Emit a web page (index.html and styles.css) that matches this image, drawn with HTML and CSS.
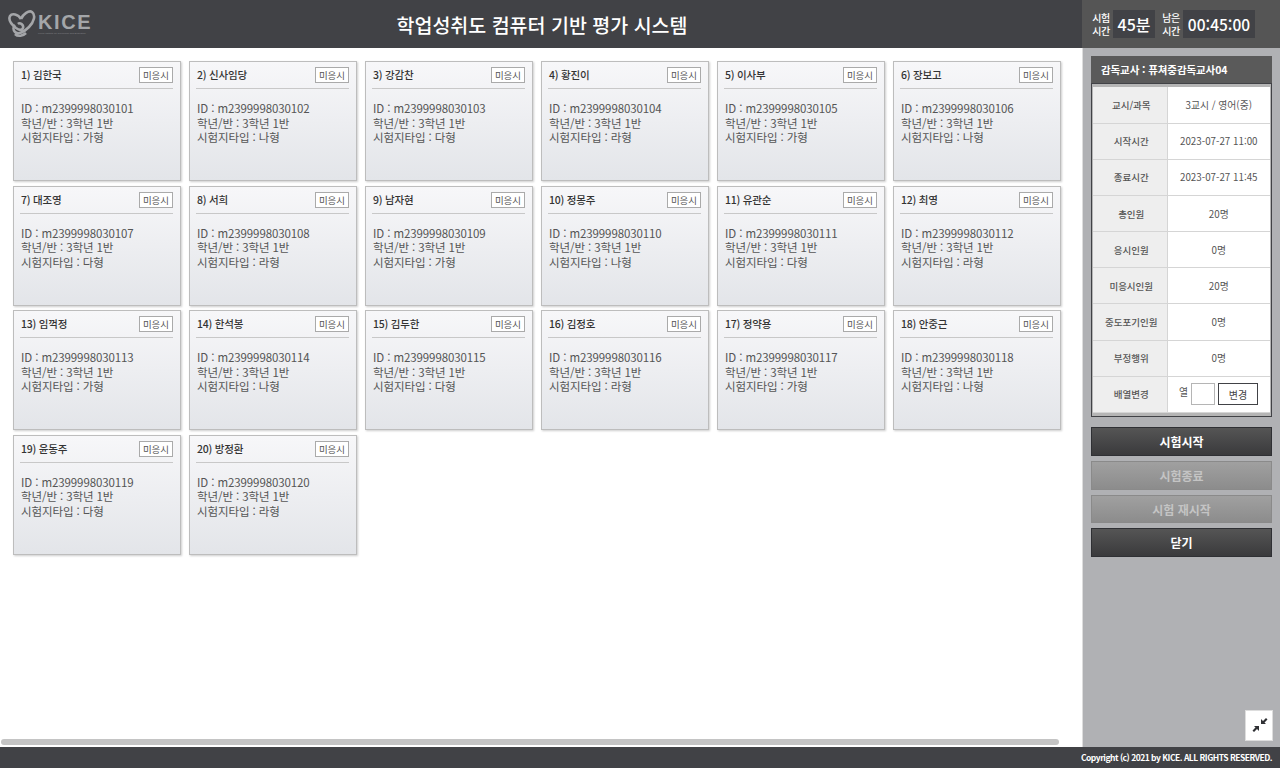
FILE: index.html
```html
<!DOCTYPE html>
<html lang="ko">
<head>
    <meta charset="UTF-8">
    <title>학업성취도 컴퓨터 기반 평가 시스템</title>
    <link rel="stylesheet" href="styles.css">
</head>
<body>
    <header class="top">
        <div class="logo">
            <svg class="logo-mark" width="28" height="28" viewBox="0 0 28 28" fill="none" stroke="#a4a6a9" stroke-width="2.6">
                <path d="M13 9 C10 4 4 3 2 6 C0 10 3 14 8 18 C11 20 14 21 15 18 C16 15 12 12 10 14"/>
                <path d="M13 9 C15 4 21 0 24 2 C28 5 26 12 21 17 C16 22 10 25 7 22 C5 20 5 17 7 15"/>
                <path d="M7 24 C10 27 15 26 18 23"/>
            </svg>
            <div class="logo-text">
                <span class="logo-name">KICE</span>
                <span class="logo-sub">Korea Institute for Curriculum and Evaluation</span>
            </div>
        </div>
        <h1 class="title">학업성취도 컴퓨터 기반 평가 시스템</h1>
        <div class="timer">
            <span class="timer-label">시험<br>시간</span>
            <span class="timer-value total">45분</span>
            <span class="timer-label">남은<br>시간</span>
            <span class="timer-value left">00:45:00</span>
        </div>
    </header>

    <div class="middle">
        <main class="content">
            <div class="grid" id="grid"></div>
            <div class="scrollbar"></div>
        </main>
        <aside class="side">
            <div class="info">
                <div class="info-head">감독교사 : 퓨쳐중감독교사04</div>
                <div class="info-body">
                    <table class="info-table">
                        <tr><th>교시/과목</th><td>3교시 / 영어(중)</td></tr>
                        <tr><th>시작시간</th><td>2023-07-27 11:00</td></tr>
                        <tr><th>종료시간</th><td>2023-07-27 11:45</td></tr>
                        <tr><th>총인원</th><td>20명</td></tr>
                        <tr><th>응시인원</th><td>0명</td></tr>
                        <tr><th>미응시인원</th><td>20명</td></tr>
                        <tr><th>중도포기인원</th><td>0명</td></tr>
                        <tr><th>부정행위</th><td>0명</td></tr>
                        <tr>
                            <th>배열변경</th>
                            <td><div class="seat"><span class="seat-label">열</span><input type="text" class="seat-input"><button class="seat-btn">변경</button></div></td>
                        </tr>
                    </table>
                </div>
            </div>
            <button class="btn">시험시작</button>
            <button class="btn off">시험종료</button>
            <button class="btn off short">시험 재시작</button>
            <button class="btn">닫기</button>
            <div class="side-foot">
                <button class="shrink">
                    <svg width="26" height="29" viewBox="0 0 26 29" fill="#2f3034">
                        <path d="M15 13 V8 L17 10 L20 7 L21.5 8.500 L18.500 11.500 L20 13 Z"/>
                        <path d="M13 15 V20 L11 18 L8 21 L6.500 19.500 L9.500 16.500 L8 15 Z"/>
                    </svg>
                </button>
            </div>
        </aside>
    </div>

    <footer class="bottom">Copyright (c) 2021 by KICE. ALL RIGHTS RESERVED.</footer>

    <script>
        const people = [
            ['김한국', '가형'], ['신사임당', '나형'], ['강감찬', '다형'], ['황진이', '라형'],
            ['이사부', '가형'], ['장보고', '나형'], ['대조영', '다형'], ['서희', '라형'],
            ['남자현', '가형'], ['정몽주', '나형'], ['유관순', '다형'], ['최영', '라형'],
            ['임꺽정', '가형'], ['한석봉', '나형'], ['김두한', '다형'], ['김정호', '라형'],
            ['정약용', '가형'], ['안중근', '나형'], ['윤동주', '다형'], ['방정환', '라형']
        ];

        const grid = document.getElementById('grid');
        people.forEach((person, i) => {
            const num = 101 + i;
            grid.innerHTML += `<div class="card">
                <div class="card-head"><span class="card-name">${i + 1}) ${person[0]}</span><span class="badge">미응시</span></div>
                <p>ID : m2399998030${num}</p>
                <p>학년/반 : 3학년 1반</p>
                <p>시험지타입 : ${person[1]}</p>
            </div>`;
        });
    </script>
</body>
</html>
```

FILE: styles.css
```css
* {
    box-sizing: border-box;
}

html, body {
    height: 100%;
}

body {
    margin: 0;
    display: flex;
    flex-direction: column;
    height: 768px;
    overflow: hidden;
    font-family: "Noto Sans CJK KR", "Noto Sans", sans-serif;
    color: #555;
    background-color: #fff;
}

.top {
    display: flex;
    align-items: center;
    height: 48px;
    background-color: #414246;
}

.logo {
    display: flex;
    align-items: center;
    gap: 2px;
    width: 100px;
    padding-left: 8px;
}

.logo-text {
    display: flex;
    flex-direction: column;
    width: 54px;
}

.logo-name {
    font-family: "Liberation Sans", sans-serif;
    font-size: 20px;
    font-weight: bold;
    line-height: 18px;
    letter-spacing: 1.6px;
    color: #a4a6a9;
}

.logo-sub {
    font-family: "Liberation Sans", sans-serif;
    font-size: 2.4px;
    line-height: 5px;
    white-space: nowrap;
    color: #85878a;
}

.title {
    flex: 1;
    margin: 0;
    padding-right: 98px;
    text-align: center;
    font-size: 19.5px;
    font-weight: 500;
    color: #fff;
}

.timer {
    display: flex;
    align-items: center;
    width: 198px;
    height: 48px;
    padding-left: 10px;
    background-color: #555;
}

.timer-label {
    width: 18px;
    font-size: 10px;
    font-weight: 500;
    line-height: 13px;
    letter-spacing: -0.5px;
    white-space: nowrap;
    text-align: center;
    color: #fff;
}

.timer-value {
    display: flex;
    align-items: center;
    justify-content: center;
    height: 28px;
    margin: 0 7px 0 3px;
    font-size: 16px;
    font-weight: 500;
    color: #fff;
    background-color: #414246;
}

.timer-value.total {
    width: 42px;
}

.timer-value.left {
    width: 72px;
    font-size: 15.5px;
}

.middle {
    flex: 1;
    display: flex;
    min-height: 0;
}

.content {
    flex: 1;
    display: flex;
    flex-direction: column;
    padding: 13px 0 0 13px;
}

.grid {
    flex: 1;
    display: grid;
    grid-template-columns: repeat(6, 168px);
    grid-auto-rows: 120px;
    gap: 4.67px 8px;
    align-content: start;
}

.card {
    padding: 5px 7px 5px 6px;
    font-size: 11.5px;
    line-height: 14.5px;
    letter-spacing: -0.1px;
    border: 1px solid #bdbdbd;
    background: linear-gradient(#f7f7f9, #e3e5e9);
    box-shadow: 1px 1px 2px rgba(0, 0, 0, 0.2);
}

.card p {
    margin: 0;
    padding-left: 1px;
}

.card-head {
    display: flex;
    justify-content: space-between;
    height: 22px;
    margin-bottom: 12px;
    border-bottom: 1px solid #c8c8c8;
}

.card-name {
    padding-left: 1px;
    font-size: 10.500px;
    font-weight: 500;
    line-height: 16px;
    letter-spacing: -0.2px;
    color: #333;
}

.badge {
    width: 34px;
    height: 16px;
    font-size: 9.500px;
    line-height: 14px;
    letter-spacing: 0;
    text-align: center;
    border: 1px solid #aaa;
    background-color: #fff;
}

.scrollbar {
    width: 1058px;
    height: 6px;
    margin: 0 0 2px -12px;
    border-radius: 3px;
    background-color: #c4c4c4;
}

.side {
    display: flex;
    flex-direction: column;
    gap: 5px;
    width: 198px;
    padding: 8px 8px 6px 8px;
    border-left: 1px solid #ddd;
    background-color: #b0b1b4;
}

.info {
    margin-bottom: 5px;
}

.info-head {
    height: 27px;
    padding-left: 10px;
    font-size: 10.500px;
    font-weight: 700;
    line-height: 27px;
    letter-spacing: -0.1px;
    color: #fff;
    background-color: #5a5a5a;
}

.info-body {
    height: 334px;
    padding: 3px 1px 0;
    border: 1px solid #414246;
    background-color: #b5b5b5;
}

.info-table {
    width: 100%;
    height: 326px;
    border-collapse: collapse;
    font-size: 9.800px;
    table-layout: fixed;
    background-color: #fff;
}

.info-table tr {
    height: 36px;
}

.info-table th, .info-table td {
    padding: 0;
    border-bottom: 1px solid #d5d5d5;
    font-weight: normal;
    text-align: center;
}

.info-table th {
    width: 74px;
    padding-left: 3px;
    font-size: 9.500px;
    font-weight: 500;
    border-right: 1px solid #d5d5d5;
    background-color: #eee;
}

.seat {
    display: flex;
    align-items: center;
    justify-content: flex-end;
    gap: 3px;
    padding-right: 12px;
}

.seat-label {
    padding: 0 0 4px;
}

.seat-input {
    width: 24px;
    height: 22px;
    padding: 0;
    border: 1px solid #b5b5b5;
}

.seat-btn {
    width: 40px;
    height: 22px;
    padding: 0;
    font-family: inherit;
    font-size: 10px;
    color: #444;
    border: 1px solid #414246;
    background-color: #fff;
}

.btn {
    flex: none;
    height: 29px;
    padding: 0;
    font-family: inherit;
    font-size: 12px;
    font-weight: 700;
    color: #fff;
    border: 1px solid #2f3034;
    background: linear-gradient(#555, #3a3a3c);
}

.btn.off {
    color: #c4c4c4;
    border-color: #8a8a8a;
    background: linear-gradient(#a0a0a0, #8c8c8c);
}

.btn.short {
    height: 28px;
}

.side-foot {
    flex: 1;
    display: flex;
    justify-content: flex-end;
    align-items: flex-end;
}

.shrink {
    width: 28px;
    height: 31px;
    margin-right: -1px;
    padding: 0;
    border: 1px solid #ddd;
    background-color: #fff;
}

.bottom {
    height: 21px;
    padding-right: 8px;
    text-align: right;
    font-size: 8.500px;
    font-weight: 700;
    line-height: 21px;
    letter-spacing: -0.5px;
    color: #fff;
    background-color: #414246;
}
```
